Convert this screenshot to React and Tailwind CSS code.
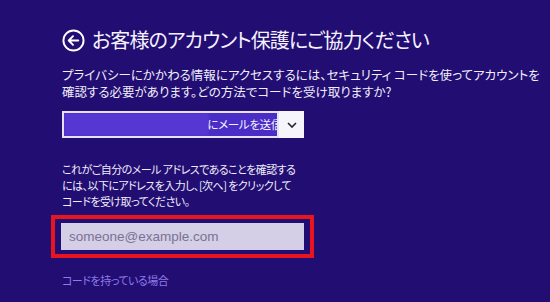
import React from "react";

const JP = "font-['Noto_Sans_CJK_JP','Noto_Sans',sans-serif] [font-feature-settings:'palt']";

const BackIcon = () => (
  <svg width="23" height="23" viewBox="0 0 24 24" fill="none" stroke="white" strokeWidth="2">
    <circle cx="12" cy="12" r="10.5" />
    <path d="M17 12H7.5M11.5 7.5L7 12l4.5 4.5" strokeLinecap="round" strokeLinejoin="round" />
  </svg>
);

const App = () => {
  return (
    <div className={`w-[550px] h-[302px] overflow-hidden bg-[#220d72] pl-[62px] pt-[29px] text-white ${JP}`}>
      {/* TITLE */}
      <div className="flex items-center h-[22px] gap-[7px]">
        <BackIcon />
        <h1 className="text-[20px] leading-[22px] tracking-[-0.9px] whitespace-nowrap text-[#f4f2ff]">
          お客様のアカウント保護にご協力ください
        </h1>
      </div>

      {/* INTRO */}
      <p className="mt-[15px] text-[12.5px] leading-[17px] whitespace-nowrap text-[#f0eefa]">
        プライバシーにかかわる情報にアクセスするには、セキュリティ コードを使ってアカウントを
        <br />
        確認する必要があります。どの方法でコードを受け取りますか?
      </p>

      {/* SELECT */}
      <div className="mt-[11px] flex w-[242px] h-[27px]">
        <div className="relative flex-1 border-2 border-[#e6e2f6] bg-[#4a2cc6] overflow-hidden flex items-center justify-end">
          <div className="absolute left-0 top-0 bottom-0 w-[145px] bg-[#5637d2] blur-[1px]" />
          <span className="relative text-[11.5px] leading-[17px] tracking-[-0.3px] whitespace-nowrap mr-[-5px] text-[#f4f2ff]">
            にメールを送信
          </span>
        </div>
        <div className="w-[25px] bg-[#f6f5fb] flex items-center justify-center">
          <svg width="10" height="6" viewBox="0 0 10 6" fill="none" stroke="#222" strokeWidth="1.6">
            <path d="M1 1l4 4 4-4" />
          </svg>
        </div>
      </div>

      {/* EMAIL TEXT */}
      <p className="mt-[23px] text-[11px] leading-[16px] tracking-[-0.55px] whitespace-nowrap text-[#f0eefa]">
        これがご自分のメール アドレスであることを確認する
        <br />
        には、以下にアドレスを入力し、[次へ] をクリックして
        <br />
        コードを受け取ってください。
      </p>

      {/* INPUT */}
      <div className="mt-[6px] -ml-[11px] w-[263px] h-[43px] border-4 border-[#e8141e] flex items-center justify-center">
        <input
          readOnly
          placeholder="someone@example.com"
          className="w-[243px] h-[27px] bg-[#d4cee6] px-[8px] text-[13.5px] font-['Liberation_Sans',sans-serif] text-[#6f6889] placeholder:text-[#7a7394] outline-none"
        />
      </div>

      {/* LINK */}
      <a className="block mt-[14px] text-[11px] leading-[17px] tracking-[-0.5px] text-[#8f7ae8] whitespace-nowrap">
        コードを持っている場合
      </a>
    </div>
  );
};

export default App;
